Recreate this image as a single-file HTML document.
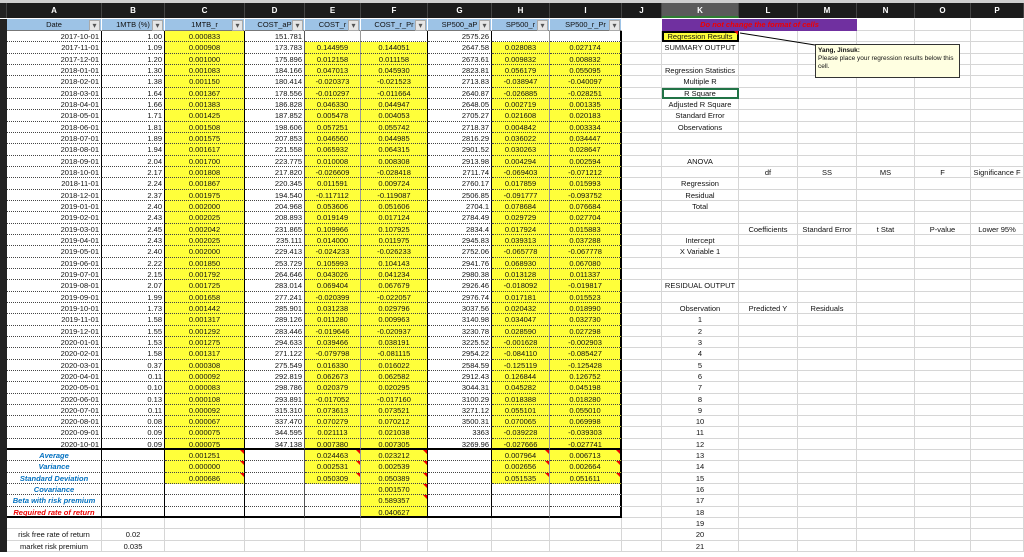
<!DOCTYPE html><html><head><meta charset="utf-8"><style>
*{box-sizing:border-box;margin:0;padding:0}
body{width:1024px;height:557px;overflow:hidden;background:#fff;font-family:"Liberation Sans",sans-serif;font-size:7.5px;color:#111;position:relative}
.top{position:absolute;left:0;top:0;width:1024px;height:3px;background:#cfcfcf}
.ch{position:absolute;left:0;top:3px;width:1024px;height:15px;background:#1c1c1c;display:flex;color:#fff;font-size:8px;font-weight:bold}
.ch span{border-right:1px solid #444;text-align:center!important;line-height:15px}
.ch span.k{background:#5a5a5a;border-bottom:2px solid #2e7d32}
.rows{position:absolute;left:0;top:19px;width:1024px}
.r{display:flex;height:11.33px;line-height:11px;white-space:nowrap}
.r.h{height:12px;line-height:12px}
.r>span,.ch>span{flex:none;overflow:visible;padding:0 2px}
.r>span:nth-child(1),.ch>span:nth-child(1){width:7px;background:#222;padding:0}
.r>span:nth-child(2),.ch>span:nth-child(2){width:95px;text-align:right}
.r>span:nth-child(3),.ch>span:nth-child(3){width:63px;text-align:right}
.r>span:nth-child(4),.ch>span:nth-child(4){width:80px;text-align:center}
.r>span:nth-child(5),.ch>span:nth-child(5){width:60px;text-align:right}
.r>span:nth-child(6),.ch>span:nth-child(6){width:56px;text-align:center}
.r>span:nth-child(7),.ch>span:nth-child(7){width:67px;text-align:center}
.r>span:nth-child(8),.ch>span:nth-child(8){width:64px;text-align:right}
.r>span:nth-child(9),.ch>span:nth-child(9){width:58px;text-align:center}
.r>span:nth-child(10),.ch>span:nth-child(10){width:72px;text-align:center}
.r>span:nth-child(11),.ch>span:nth-child(11){width:40px}
.r>span:nth-child(12),.ch>span:nth-child(12){width:77px;text-align:center}
.r>span:nth-child(13),.ch>span:nth-child(13){width:59px;text-align:center}
.r>span:nth-child(14),.ch>span:nth-child(14){width:59px;text-align:center}
.r>span:nth-child(15),.ch>span:nth-child(15){width:58px;text-align:center}
.r>span:nth-child(16),.ch>span:nth-child(16){width:56px;text-align:center}
.r>span:nth-child(17),.ch>span:nth-child(17){width:53px;text-align:center}
.r>span:nth-child(n+11){border-right:1px solid #d6d6d6;border-bottom:1px solid #d6d6d6}
.r.g>span:nth-child(n+2){border-right:1px solid #d6d6d6;border-bottom:1px solid #d6d6d6}
.r.t>span:nth-child(n+2):nth-child(-n+10){border-bottom:1px dotted #444}
.r.t>span:nth-child(2),.r.t>span:nth-child(3),.r.t>span:nth-child(4),.r.t>span:nth-child(7),.r.t>span:nth-child(8){border-right:1px solid #000}
.r.t>span:nth-child(5){border-right:1px solid #555}
.r.t>span:nth-child(6),.r.t>span:nth-child(9){border-right:1px solid #999}
.r.t>span:nth-child(10){border-right:2px solid #000}
.r.tb>span:nth-child(n+2):nth-child(-n+10){border-bottom:2px solid #000}
.r.h>span:nth-child(n+2):nth-child(-n+10){background:#9dc3e6;border-right:1px solid #fff;text-align:center;position:relative;border-bottom:1px solid #777}
.r.h>span:nth-child(n+2):nth-child(-n+10)::after{content:"▾";position:absolute;right:1px;top:1px;width:9px;height:9px;line-height:9px;font-size:8px;background:#e6e6e6;color:#555;border:1px solid #aaa}
.y{background:#ffff3a}
.lb{color:#0070c0;font-weight:bold;font-style:italic;text-align:center!important}
.rd{color:#e00;font-weight:bold;font-style:italic;text-align:center!important}
.tri{position:relative}
.tri::before{content:"";position:absolute;right:0;top:0;border-left:4px solid transparent;border-top:4px solid #e00}
.cm{position:absolute;left:815px;top:44px;width:145px;height:34px;background:#ffffe1;border:1px solid #333;font-size:6.5px;padding:2px;line-height:8px}
.pur{position:absolute;left:662px;top:19px;width:195px;height:12px;background:#7030a0;color:#e00;font-weight:bold;font-style:italic;text-align:center;line-height:12px;font-size:7.5px}
</style></head><body>
<div class="top"></div>
<div class="ch"><span></span><span>A</span><span>B</span><span>C</span><span>D</span><span>E</span><span>F</span><span>G</span><span>H</span><span>I</span><span>J</span><span class="k">K</span><span>L</span><span>M</span><span>N</span><span>O</span><span>P</span></div>
<div class="rows">
<div class="r h"><span></span><span>Date</span><span>1MTB (%)</span><span>1MTB_r</span><span>COST_aP</span><span>COST_r</span><span>COST_r_Pr</span><span>SP500_aP</span><span>SP500_r</span><span>SP500_r_Pr</span><span style="border:0"></span><span></span><span></span><span></span><span></span><span></span><span></span></div>
<div class="r t"><span></span><span>2017-10-01</span><span>1.00</span><span class="y">0.000833</span><span>151.781</span><span></span><span></span><span>2575.26</span><span></span><span></span><span></span><span class="y tri" style="outline:2px solid #000;outline-offset:-2px">Regression Results</span><span></span><span></span><span></span><span></span><span></span></div>
<div class="r t"><span></span><span>2017-11-01</span><span>1.09</span><span class="y">0.000908</span><span>173.783</span><span class="y">0.144959</span><span class="y">0.144051</span><span>2647.58</span><span class="y">0.028083</span><span class="y">0.027174</span><span></span><span>SUMMARY OUTPUT</span><span></span><span></span><span></span><span></span><span></span></div>
<div class="r t"><span></span><span>2017-12-01</span><span>1.20</span><span class="y">0.001000</span><span>175.896</span><span class="y">0.012158</span><span class="y">0.011158</span><span>2673.61</span><span class="y">0.009832</span><span class="y">0.008832</span><span></span><span></span><span></span><span></span><span></span><span></span><span></span></div>
<div class="r t"><span></span><span>2018-01-01</span><span>1.30</span><span class="y">0.001083</span><span>184.166</span><span class="y">0.047013</span><span class="y">0.045930</span><span>2823.81</span><span class="y">0.056179</span><span class="y">0.055095</span><span></span><span>Regression Statistics</span><span></span><span></span><span></span><span></span><span></span></div>
<div class="r t"><span></span><span>2018-02-01</span><span>1.38</span><span class="y">0.001150</span><span>180.414</span><span class="y">-0.020373</span><span class="y">-0.021523</span><span>2713.83</span><span class="y">-0.038947</span><span class="y">-0.040097</span><span></span><span>Multiple R</span><span></span><span></span><span></span><span></span><span></span></div>
<div class="r t"><span></span><span>2018-03-01</span><span>1.64</span><span class="y">0.001367</span><span>178.556</span><span class="y">-0.010297</span><span class="y">-0.011664</span><span>2640.87</span><span class="y">-0.026885</span><span class="y">-0.028251</span><span></span><span style="outline:2px solid #217346;outline-offset:-2px">R Square</span><span></span><span></span><span></span><span></span><span></span></div>
<div class="r t"><span></span><span>2018-04-01</span><span>1.66</span><span class="y">0.001383</span><span>186.828</span><span class="y">0.046330</span><span class="y">0.044947</span><span>2648.05</span><span class="y">0.002719</span><span class="y">0.001335</span><span></span><span>Adjusted R Square</span><span></span><span></span><span></span><span></span><span></span></div>
<div class="r t"><span></span><span>2018-05-01</span><span>1.71</span><span class="y">0.001425</span><span>187.852</span><span class="y">0.005478</span><span class="y">0.004053</span><span>2705.27</span><span class="y">0.021608</span><span class="y">0.020183</span><span></span><span>Standard Error</span><span></span><span></span><span></span><span></span><span></span></div>
<div class="r t"><span></span><span>2018-06-01</span><span>1.81</span><span class="y">0.001508</span><span>198.606</span><span class="y">0.057251</span><span class="y">0.055742</span><span>2718.37</span><span class="y">0.004842</span><span class="y">0.003334</span><span></span><span>Observations</span><span></span><span></span><span></span><span></span><span></span></div>
<div class="r t"><span></span><span>2018-07-01</span><span>1.89</span><span class="y">0.001575</span><span>207.853</span><span class="y">0.046560</span><span class="y">0.044985</span><span>2816.29</span><span class="y">0.036022</span><span class="y">0.034447</span><span></span><span></span><span></span><span></span><span></span><span></span><span></span></div>
<div class="r t"><span></span><span>2018-08-01</span><span>1.94</span><span class="y">0.001617</span><span>221.558</span><span class="y">0.065932</span><span class="y">0.064315</span><span>2901.52</span><span class="y">0.030263</span><span class="y">0.028647</span><span></span><span></span><span></span><span></span><span></span><span></span><span></span></div>
<div class="r t"><span></span><span>2018-09-01</span><span>2.04</span><span class="y">0.001700</span><span>223.775</span><span class="y">0.010008</span><span class="y">0.008308</span><span>2913.98</span><span class="y">0.004294</span><span class="y">0.002594</span><span></span><span>ANOVA</span><span></span><span></span><span></span><span></span><span></span></div>
<div class="r t"><span></span><span>2018-10-01</span><span>2.17</span><span class="y">0.001808</span><span>217.820</span><span class="y">-0.026609</span><span class="y">-0.028418</span><span>2711.74</span><span class="y">-0.069403</span><span class="y">-0.071212</span><span></span><span></span><span>df</span><span>SS</span><span>MS</span><span>F</span><span>Significance F</span></div>
<div class="r t"><span></span><span>2018-11-01</span><span>2.24</span><span class="y">0.001867</span><span>220.345</span><span class="y">0.011591</span><span class="y">0.009724</span><span>2760.17</span><span class="y">0.017859</span><span class="y">0.015993</span><span></span><span>Regression</span><span></span><span></span><span></span><span></span><span></span></div>
<div class="r t"><span></span><span>2018-12-01</span><span>2.37</span><span class="y">0.001975</span><span>194.540</span><span class="y">-0.117112</span><span class="y">-0.119087</span><span>2506.85</span><span class="y">-0.091777</span><span class="y">-0.093752</span><span></span><span>Residual</span><span></span><span></span><span></span><span></span><span></span></div>
<div class="r t"><span></span><span>2019-01-01</span><span>2.40</span><span class="y">0.002000</span><span>204.968</span><span class="y">0.053606</span><span class="y">0.051606</span><span>2704.1</span><span class="y">0.078684</span><span class="y">0.076684</span><span></span><span>Total</span><span></span><span></span><span></span><span></span><span></span></div>
<div class="r t"><span></span><span>2019-02-01</span><span>2.43</span><span class="y">0.002025</span><span>208.893</span><span class="y">0.019149</span><span class="y">0.017124</span><span>2784.49</span><span class="y">0.029729</span><span class="y">0.027704</span><span></span><span></span><span></span><span></span><span></span><span></span><span></span></div>
<div class="r t"><span></span><span>2019-03-01</span><span>2.45</span><span class="y">0.002042</span><span>231.865</span><span class="y">0.109966</span><span class="y">0.107925</span><span>2834.4</span><span class="y">0.017924</span><span class="y">0.015883</span><span></span><span></span><span>Coefficients</span><span>Standard Error</span><span>t Stat</span><span>P-value</span><span>Lower 95%</span></div>
<div class="r t"><span></span><span>2019-04-01</span><span>2.43</span><span class="y">0.002025</span><span>235.111</span><span class="y">0.014000</span><span class="y">0.011975</span><span>2945.83</span><span class="y">0.039313</span><span class="y">0.037288</span><span></span><span>Intercept</span><span></span><span></span><span></span><span></span><span></span></div>
<div class="r t"><span></span><span>2019-05-01</span><span>2.40</span><span class="y">0.002000</span><span>229.413</span><span class="y">-0.024233</span><span class="y">-0.026233</span><span>2752.06</span><span class="y">-0.065778</span><span class="y">-0.067778</span><span></span><span>X Variable 1</span><span></span><span></span><span></span><span></span><span></span></div>
<div class="r t"><span></span><span>2019-06-01</span><span>2.22</span><span class="y">0.001850</span><span>253.729</span><span class="y">0.105993</span><span class="y">0.104143</span><span>2941.76</span><span class="y">0.068930</span><span class="y">0.067080</span><span></span><span></span><span></span><span></span><span></span><span></span><span></span></div>
<div class="r t"><span></span><span>2019-07-01</span><span>2.15</span><span class="y">0.001792</span><span>264.646</span><span class="y">0.043026</span><span class="y">0.041234</span><span>2980.38</span><span class="y">0.013128</span><span class="y">0.011337</span><span></span><span></span><span></span><span></span><span></span><span></span><span></span></div>
<div class="r t"><span></span><span>2019-08-01</span><span>2.07</span><span class="y">0.001725</span><span>283.014</span><span class="y">0.069404</span><span class="y">0.067679</span><span>2926.46</span><span class="y">-0.018092</span><span class="y">-0.019817</span><span></span><span>RESIDUAL OUTPUT</span><span></span><span></span><span></span><span></span><span></span></div>
<div class="r t"><span></span><span>2019-09-01</span><span>1.99</span><span class="y">0.001658</span><span>277.241</span><span class="y">-0.020399</span><span class="y">-0.022057</span><span>2976.74</span><span class="y">0.017181</span><span class="y">0.015523</span><span></span><span></span><span></span><span></span><span></span><span></span><span></span></div>
<div class="r t"><span></span><span>2019-10-01</span><span>1.73</span><span class="y">0.001442</span><span>285.901</span><span class="y">0.031238</span><span class="y">0.029796</span><span>3037.56</span><span class="y">0.020432</span><span class="y">0.018990</span><span></span><span>Observation</span><span>Predicted Y</span><span>Residuals</span><span></span><span></span><span></span></div>
<div class="r t"><span></span><span>2019-11-01</span><span>1.58</span><span class="y">0.001317</span><span>289.126</span><span class="y">0.011280</span><span class="y">0.009963</span><span>3140.98</span><span class="y">0.034047</span><span class="y">0.032730</span><span></span><span>1</span><span></span><span></span><span></span><span></span><span></span></div>
<div class="r t"><span></span><span>2019-12-01</span><span>1.55</span><span class="y">0.001292</span><span>283.446</span><span class="y">-0.019646</span><span class="y">-0.020937</span><span>3230.78</span><span class="y">0.028590</span><span class="y">0.027298</span><span></span><span>2</span><span></span><span></span><span></span><span></span><span></span></div>
<div class="r t"><span></span><span>2020-01-01</span><span>1.53</span><span class="y">0.001275</span><span>294.633</span><span class="y">0.039466</span><span class="y">0.038191</span><span>3225.52</span><span class="y">-0.001628</span><span class="y">-0.002903</span><span></span><span>3</span><span></span><span></span><span></span><span></span><span></span></div>
<div class="r t"><span></span><span>2020-02-01</span><span>1.58</span><span class="y">0.001317</span><span>271.122</span><span class="y">-0.079798</span><span class="y">-0.081115</span><span>2954.22</span><span class="y">-0.084110</span><span class="y">-0.085427</span><span></span><span>4</span><span></span><span></span><span></span><span></span><span></span></div>
<div class="r t"><span></span><span>2020-03-01</span><span>0.37</span><span class="y">0.000308</span><span>275.549</span><span class="y">0.016330</span><span class="y">0.016022</span><span>2584.59</span><span class="y">-0.125119</span><span class="y">-0.125428</span><span></span><span>5</span><span></span><span></span><span></span><span></span><span></span></div>
<div class="r t"><span></span><span>2020-04-01</span><span>0.11</span><span class="y">0.000092</span><span>292.819</span><span class="y">0.062673</span><span class="y">0.062582</span><span>2912.43</span><span class="y">0.126844</span><span class="y">0.126752</span><span></span><span>6</span><span></span><span></span><span></span><span></span><span></span></div>
<div class="r t"><span></span><span>2020-05-01</span><span>0.10</span><span class="y">0.000083</span><span>298.786</span><span class="y">0.020379</span><span class="y">0.020295</span><span>3044.31</span><span class="y">0.045282</span><span class="y">0.045198</span><span></span><span>7</span><span></span><span></span><span></span><span></span><span></span></div>
<div class="r t"><span></span><span>2020-06-01</span><span>0.13</span><span class="y">0.000108</span><span>293.891</span><span class="y">-0.017052</span><span class="y">-0.017160</span><span>3100.29</span><span class="y">0.018388</span><span class="y">0.018280</span><span></span><span>8</span><span></span><span></span><span></span><span></span><span></span></div>
<div class="r t"><span></span><span>2020-07-01</span><span>0.11</span><span class="y">0.000092</span><span>315.310</span><span class="y">0.073613</span><span class="y">0.073521</span><span>3271.12</span><span class="y">0.055101</span><span class="y">0.055010</span><span></span><span>9</span><span></span><span></span><span></span><span></span><span></span></div>
<div class="r t"><span></span><span>2020-08-01</span><span>0.08</span><span class="y">0.000067</span><span>337.470</span><span class="y">0.070279</span><span class="y">0.070212</span><span>3500.31</span><span class="y">0.070065</span><span class="y">0.069998</span><span></span><span>10</span><span></span><span></span><span></span><span></span><span></span></div>
<div class="r t"><span></span><span>2020-09-01</span><span>0.09</span><span class="y">0.000075</span><span>344.595</span><span class="y">0.021113</span><span class="y">0.021038</span><span>3363</span><span class="y">-0.039228</span><span class="y">-0.039303</span><span></span><span>11</span><span></span><span></span><span></span><span></span><span></span></div>
<div class="r t tb"><span></span><span>2020-10-01</span><span>0.09</span><span class="y">0.000075</span><span>347.138</span><span class="y">0.007380</span><span class="y">0.007305</span><span>3269.96</span><span class="y">-0.027666</span><span class="y">-0.027741</span><span></span><span>12</span><span></span><span></span><span></span><span></span><span></span></div>
<div class="r t"><span></span><span class="lb">Average</span><span></span><span class="y tri">0.001251</span><span></span><span class="y tri">0.024463</span><span class="y tri">0.023212</span><span></span><span class="y tri">0.007964</span><span class="y tri">0.006713</span><span></span><span>13</span><span></span><span></span><span></span><span></span><span></span></div>
<div class="r t"><span></span><span class="lb">Variance</span><span></span><span class="y tri">0.000000</span><span></span><span class="y tri">0.002531</span><span class="y tri">0.002539</span><span></span><span class="y tri">0.002656</span><span class="y tri">0.002664</span><span></span><span>14</span><span></span><span></span><span></span><span></span><span></span></div>
<div class="r t"><span></span><span class="lb">Standard Deviation</span><span></span><span class="y tri">0.000686</span><span></span><span class="y tri">0.050309</span><span class="y tri">0.050389</span><span></span><span class="y tri">0.051535</span><span class="y tri">0.051611</span><span></span><span>15</span><span></span><span></span><span></span><span></span><span></span></div>
<div class="r t"><span></span><span class="lb">Covariance</span><span></span><span></span><span></span><span></span><span class="y tri">0.001570</span><span></span><span></span><span></span><span></span><span>16</span><span></span><span></span><span></span><span></span><span></span></div>
<div class="r t"><span></span><span class="lb">Beta with risk premium</span><span></span><span></span><span></span><span></span><span class="y tri">0.589357</span><span></span><span></span><span></span><span></span><span>17</span><span></span><span></span><span></span><span></span><span></span></div>
<div class="r t tb"><span></span><span class="rd">Required rate of return</span><span></span><span></span><span></span><span></span><span class="y">0.040627</span><span></span><span></span><span></span><span></span><span>18</span><span></span><span></span><span></span><span></span><span></span></div>
<div class="r g"><span></span><span></span><span></span><span></span><span></span><span></span><span></span><span></span><span></span><span></span><span></span><span>19</span><span></span><span></span><span></span><span></span><span></span></div>
<div class="r g"><span></span><span style="text-align:center">risk free rate of return</span><span style="text-align:center">0.02</span><span></span><span></span><span></span><span></span><span></span><span></span><span></span><span></span><span>20</span><span></span><span></span><span></span><span></span><span></span></div>
<div class="r g"><span></span><span style="text-align:center">market risk premium</span><span style="text-align:center">0.035</span><span></span><span></span><span></span><span></span><span></span><span></span><span></span><span></span><span>21</span><span></span><span></span><span></span><span></span><span></span></div>
</div>
<div class="pur">Do not change the format of cells</div>
<svg style="position:absolute;left:0;top:0" width="1024" height="557"><line x1="740" y1="33" x2="815" y2="45" stroke="#000" stroke-width="1"/></svg>
<div class="cm"><b>Yang, Jinsuk:</b><br>Please place your regression results below this cell.</div>
</body></html>
